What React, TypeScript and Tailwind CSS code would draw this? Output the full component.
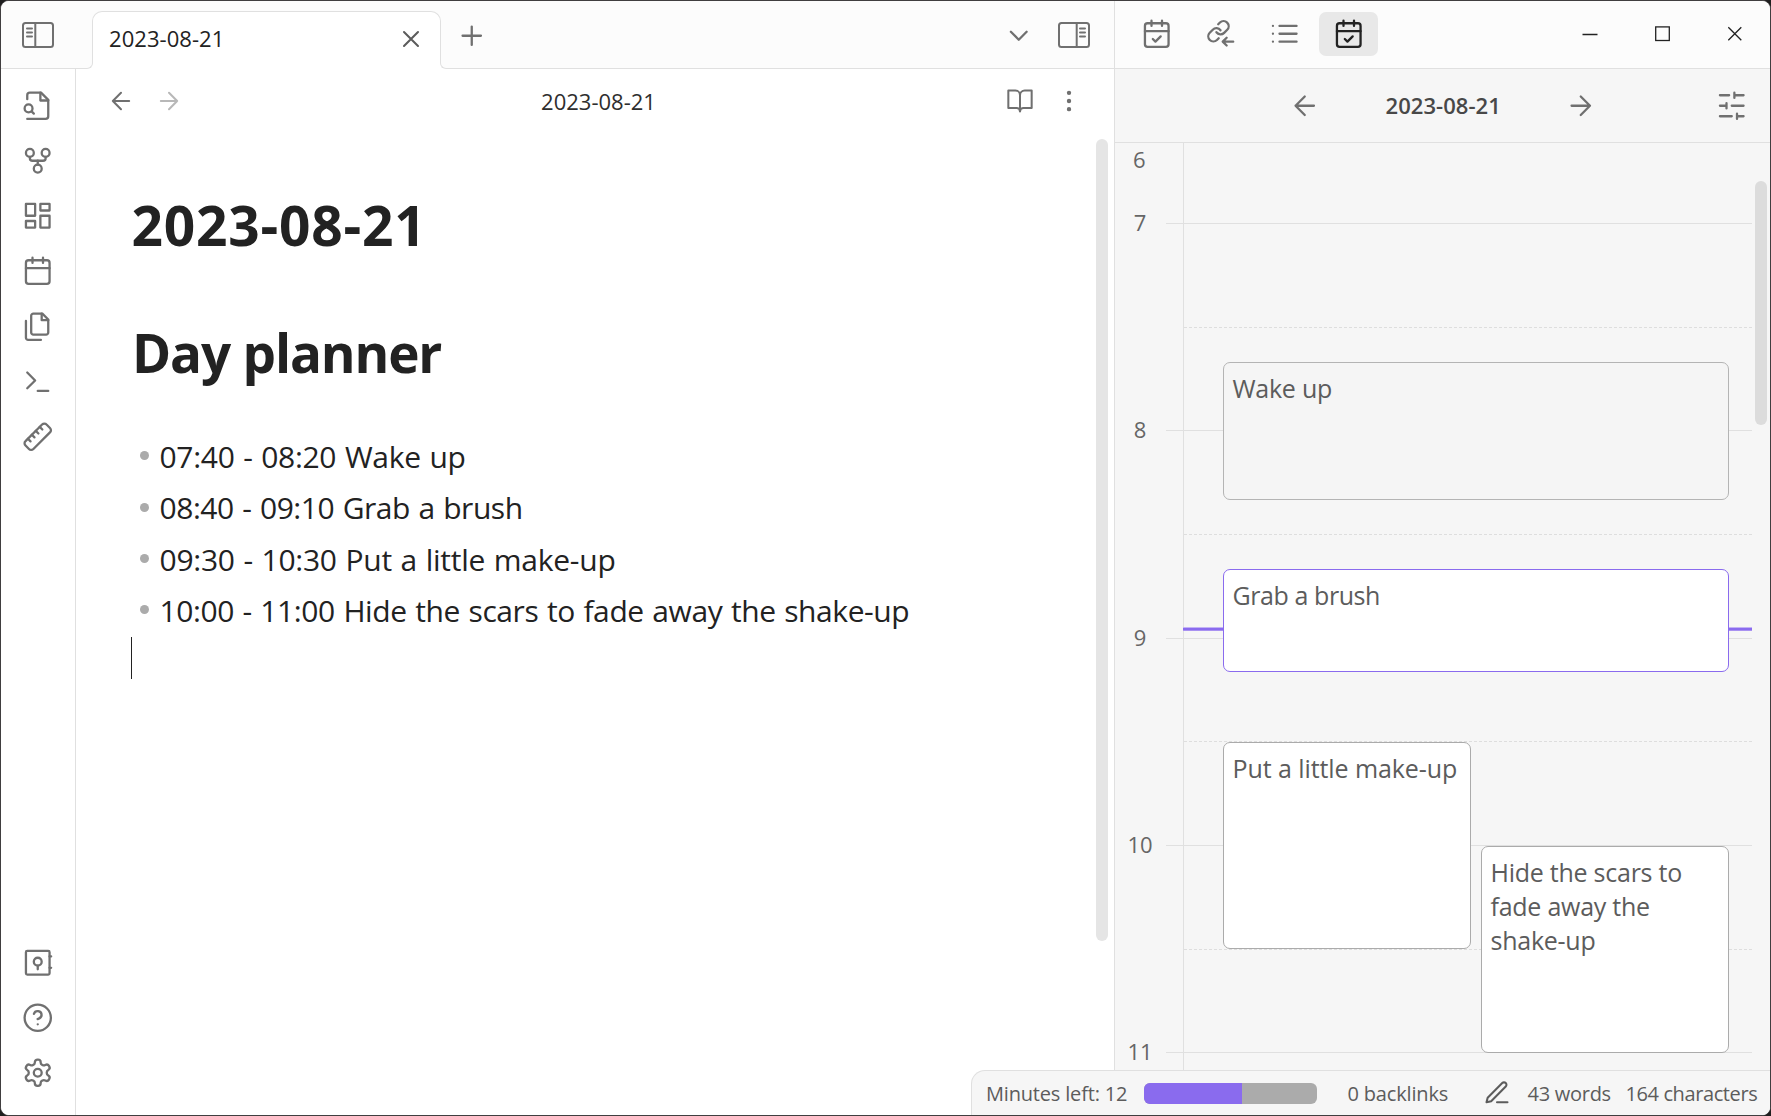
import type { ReactNode } from 'react';

const PATHS: Record<string, ReactNode> = {
  fileSearch: (
    <>
      <path d="M4 22h14a2 2 0 0 0 2-2V7.5L14.5 2H6a2 2 0 0 0-2 2v3" />
      <path d="M14 2v6h6" />
      <circle cx="5" cy="14" r="3" />
      <path d="m9 18-1.5-1.5" />
    </>
  ),
  graph: (
    <>
      <circle cx="12" cy="18" r="3" />
      <circle cx="6" cy="6" r="3" />
      <circle cx="18" cy="6" r="3" />
      <path d="M18 9v1a2 2 0 0 1-2 2H8a2 2 0 0 1-2-2V9" />
      <path d="M12 12v3" />
    </>
  ),
  dashboard: (
    <>
      <path d="M3 3h7v9H3z" />
      <path d="M14 3h7v5h-7z" />
      <path d="M14 12h7v9h-7z" />
      <path d="M3 16h7v5H3z" />
    </>
  ),
  calendar: (
    <>
      <rect x="3" y="4" width="18" height="18" rx="2" />
      <path d="M16 2v4M8 2v4M3 10h18" />
    </>
  ),
  calendarCheck: (
    <>
      <rect x="3" y="4" width="18" height="18" rx="2" />
      <path d="M16 2v4M8 2v4M3 10h18" />
      <path d="m9 16 2 2 4-4" />
    </>
  ),
  files: (
    <>
      <path d="M15.5 2H8.6c-.4 0-.8.2-1.1.5-.3.3-.5.7-.5 1.1v12.8c0 .4.2.8.5 1.1.3.3.7.5 1.1.5h9.8c.4 0 .8-.2 1.1-.5.3-.3.5-.7.5-1.1V6.5L15.5 2z" />
      <path d="M3 7.6v12.8c0 .4.2.8.5 1.1.3.3.7.5 1.1.5h9.8" />
      <path d="M15 2v5h5" />
    </>
  ),
  terminal: <path d="m4 17 6-6-6-6M12 19h8" />,
  ruler: (
    <>
      <path d="M21.3 8.7 8.7 21.3c-1 1-2.5 1-3.4 0l-2.6-2.6c-1-1-1-2.5 0-3.4L15.3 2.7c1-1 2.5-1 3.4 0l2.6 2.6c1 1 1 2.5 0 3.4Z" />
      <path d="m7.5 10.5 2 2M10.5 7.5l2 2M13.5 4.5l2 2M4.5 13.5l2 2" />
    </>
  ),
  vault: (
    <>
      <rect x="3" y="3" width="18" height="18" rx="1" />
      <circle cx="12" cy="11.2" r="3" />
      <path d="M12 14.2v2.8M21 7.2h1.2M21 15.9h1.2" />
    </>
  ),
  help: (
    <>
      <circle cx="12" cy="12" r="10" />
      <path d="M9.09 9a3 3 0 0 1 5.83 1c0 2-3 3-3 3M12 17h.01" />
    </>
  ),
  settings: (
    <>
      <path d="M12.22 2h-.44a2 2 0 0 0-2 2v.18a2 2 0 0 1-1 1.73l-.43.25a2 2 0 0 1-2 0l-.15-.08a2 2 0 0 0-2.73.73l-.22.38a2 2 0 0 0 .73 2.73l.15.1a2 2 0 0 1 1 1.72v.51a2 2 0 0 1-1 1.74l-.15.09a2 2 0 0 0-.73 2.73l.22.38a2 2 0 0 0 2.73.73l.15-.08a2 2 0 0 1 2 0l.43.25a2 2 0 0 1 1 1.73V20a2 2 0 0 0 2 2h.44a2 2 0 0 0 2-2v-.18a2 2 0 0 1 1-1.73l.43-.25a2 2 0 0 1 2 0l.15.08a2 2 0 0 0 2.73-.73l.22-.39a2 2 0 0 0-.73-2.73l-.15-.08a2 2 0 0 1-1-1.74v-.5a2 2 0 0 1 1-1.74l.15-.09a2 2 0 0 0 .73-2.73l-.22-.38a2 2 0 0 0-2.73-.73l-.15.08a2 2 0 0 1-2 0l-.43-.25a2 2 0 0 1-1-1.73V4a2 2 0 0 0-2-2z" />
      <circle cx="12" cy="12" r="3" />
    </>
  ),
  backlinks: (
    <>
      <g transform="translate(.9 .75) scale(.78)" strokeWidth="2.25">
        <path d="M10 13a5 5 0 0 0 7.54.54l3-3a5 5 0 0 0-7.07-7.07l-1.72 1.71" />
        <path d="M14 11a5 5 0 0 0-7.54-.54l-3 3a5 5 0 0 0 7.07 7.07l1.71-1.71" />
      </g>
      <path d="M21.5 18h-7.8M16.5 15l-3 3 3 3" />
    </>
  ),
  list: <path d="M8 6h13M8 12h13M8 18h13M3 6h.01M3 12h.01M3 18h.01" />,
  sliders: <path d="M21 4h-7M10 4H3M21 12h-9M8 12H3M21 20h-5M12 20H3M14 2v4M8 10v4M16 18v4" />,
  pen: <path d="M12 20h9M16.5 3.5a2.121 2.121 0 0 1 3 3L7 19l-4 1 1-4Z" />,
  book: <path d="M2 3h6a4 4 0 0 1 4 4v14a3 3 0 0 0-3-3H2zM22 3h-6a4 4 0 0 0-4 4v14a3 3 0 0 1 3-3h7z" />,
  more: (
    <>
      <circle cx="12" cy="12" r="1" />
      <circle cx="12" cy="5" r="1" />
      <circle cx="12" cy="19" r="1" />
    </>
  ),
  x: <path d="M18 6 6 18M6 6l12 12" />,
  plus: <path d="M12 5v14M5 12h14" />,
  chevronDown: <path d="m6 9 6 6 6-6" />,
  arrowLeft: <path d="M19 12H5M12 19l-7-7 7-7" />,
  arrowRight: <path d="M5 12h14M12 5l7 7-7 7" />,
};

function Icon({ name, small = false, className = 'text-[#707070]' }: { name: string; small?: boolean; className?: string }) {
  const size = small ? 28 : 31.5;
  return (
    <svg
      width={size}
      height={size}
      viewBox="0 0 24 24"
      fill="none"
      stroke="currentColor"
      strokeWidth="1.75"
      strokeLinecap="round"
      strokeLinejoin="round"
      className={`shrink-0 ${className}`}
    >
      {PATHS[name]}
    </svg>
  );
}

function SidebarToggle({ flip = false }: { flip?: boolean }) {
  return (
    <svg
      width="32"
      height="26"
      viewBox="0 0 32 26"
      fill="none"
      stroke="#707070"
      strokeWidth="2"
      strokeLinecap="round"
      className={flip ? 'shrink-0 -scale-x-100' : 'shrink-0'}
    >
      <rect x="1" y="1" width="30" height="24" rx="2.5" />
      <path d="M13.3 1v24M5 6.5h5M5 10.5h5M5 14.5h5" />
    </svg>
  );
}

const RIBBON = ['fileSearch', 'graph', 'dashboard', 'calendar', 'files', 'terminal', 'ruler'];
const RIBBON_BOTTOM = ['vault', 'help', 'settings'];

const PLAN = [
  { text: '07:40 - 08:20 Wake up', tracking: 'tracking-[-0.3px]' },
  { text: '08:40 - 09:10 Grab a brush', tracking: 'tracking-[-0.46px]' },
  { text: '09:30 - 10:30 Put a little make-up', tracking: 'tracking-[-0.26px]' },
  { text: '10:00 - 11:00 Hide the scars to fade away the shake-up', tracking: 'tracking-[-0.41px]' },
];

const CARDS = [
  { title: 'Wake up', box: 'left-[108px] top-[219px] w-[506px] h-[138px] border-[#b4b4b4] bg-[#f5f5f5] tracking-[-0.25px]' },
  { title: 'Grab a brush', box: 'left-[108px] top-[426px] w-[506px] h-[103px] border-[#8a6bee] bg-white tracking-[-0.42px]' },
  { title: 'Put a little make-up', box: 'left-[108px] top-[599px] w-[248px] h-[207px] border-[#ababab] bg-white tracking-[-0.08px]' },
  { title: 'Hide the scars to fade away the shake-up', box: 'left-[366px] top-[703px] w-[248px] h-[207px] border-[#ababab] bg-white tracking-[-0.25px]' },
];

function TopBar() {
  return (
    <header className="flex h-[68px] shrink-0 bg-[#fcfcfc]">
      <div className="flex w-[91px] border-b border-[#e0e0e0] pt-[21px] pl-[21px]">
        <SidebarToggle />
      </div>
      <div className="relative mt-2.5 flex w-[349px] items-center justify-between rounded-t-[10px] border border-b-0 border-[#e0e0e0] bg-white pr-[15px] pb-[4px] pl-4">
        <span className="-mt-px text-[22px] tracking-[0.05px] text-[#222]">2023-08-21</span>
        <Icon name="x" small className="text-[#5c5c5c]" />
        <span className="absolute bottom-0 -left-[7px] h-[7px] w-[7px] bg-white">
          <span className="block h-full w-full rounded-br-[6px] border-r border-b border-[#e0e0e0] bg-[#fcfcfc]" />
        </span>
        <span className="absolute -right-[7px] bottom-0 h-[7px] w-[7px] bg-white">
          <span className="block h-full w-full rounded-bl-[6px] border-b border-l border-[#e0e0e0] bg-[#fcfcfc]" />
        </span>
      </div>
      <div className="flex flex-1 items-center border-b border-[#e0e0e0] pt-0.5 pr-[24.5px] pb-px pl-[15px]">
        <Icon name="plus" className="mt-0.5 text-[#707070]" />
        <span className="mt-0.5 mr-[23.5px] ml-auto">
          <Icon name="chevronDown" />
        </span>
        <SidebarToggle flip />
      </div>
      <div className="flex w-[656px] items-center border-b border-l border-[#e0e0e0] pb-px pl-3">
        <div className="flex gap-[5px]">
          {['calendarCheck', 'backlinks', 'list'].map((n) => (
            <span key={n} className="flex h-11 w-[59px] items-center justify-center">
              <Icon name={n} />
            </span>
          ))}
          <span className="flex h-11 w-[59px] items-center justify-center rounded-[7px] bg-[#e8e8e8]">
            <Icon name="calendarCheck" className="text-[#222]" />
          </span>
        </div>
        <svg width="160" height="16" viewBox="0 0 160 16" fill="none" stroke="#222" className="mr-[28px] ml-auto -mt-px" strokeWidth="1.3">
          <path d="M.5 8.5h15" />
          <rect x="73.7" y=".9" width="13.6" height="13.6" />
          <path d="m146.3 1.2 13 13M159.3 1.2l-13 13" />
        </svg>
      </div>
    </header>
  );
}

function Ribbon() {
  return (
    <nav className="flex w-[75px] flex-col items-center justify-between border-r border-[#e0e0e0] bg-white pt-[9px] pb-[15px]">
      <div>
        {RIBBON.map((n) => (
          <div key={n} className="flex h-[55.2px] items-center">
            <Icon name={n} />
          </div>
        ))}
      </div>
      <div>
        {RIBBON_BOTTOM.map((n) => (
          <div key={n} className="flex h-[55.1px] items-center">
            <Icon name={n} />
          </div>
        ))}
      </div>
    </nav>
  );
}

function Editor() {
  return (
    <main className="relative flex flex-1 flex-col bg-white">
      <div className="flex h-16 items-center justify-between pr-[31px] pl-[31px]">
        <div className="flex w-40 gap-5">
          <Icon name="arrowLeft" small />
          <Icon name="arrowRight" small className="text-[#b8b8b8]" />
        </div>
        <span className="ml-[7px] text-[22px] text-[#2e2e2e]">2023-08-21</span>
        <div className="flex w-40 justify-end gap-[21px]">
          <Icon name="book" small />
          <Icon name="more" small />
        </div>
      </div>
      <article className="pl-[55px] text-[#222]">
        <h1 className="mt-[51px] pl-[0.5px] text-[55px] leading-[82px] font-bold tracking-[0.8px]">2023-08-21</h1>
        <h2 className="mt-[46px] pl-px text-[53px] leading-[82px] font-bold tracking-[-1.15px]">Day planner</h2>
        <ul className="mt-[37px] text-[30px] leading-[51.4px]">
          {PLAN.map((p) => (
            <li key={p.text} className="flex items-center pl-[9px]">
              <span className="-mt-0.5 mr-[10.5px] h-[9px] w-[9px] rounded-full bg-[#ababab]" />
              <span className={`[word-spacing:1.2px] ${p.tracking}`}>{p.text}</span>
            </li>
          ))}
        </ul>
        <div className="h-[42px] w-px bg-[#222]" />
      </article>
      <div className="absolute top-[70px] right-[6px] h-[802px] w-3 rounded-[6px] bg-[#e5e5e5]" />
    </main>
  );
}

function Planner() {
  return (
    <aside className="flex w-[656px] flex-col border-l border-[#e0e0e0] bg-[#f6f6f6]">
      <div className="flex h-[74px] shrink-0 items-center border-b border-[#e0e0e0] pr-[23px] pl-[173.5px]">
        <Icon name="arrowLeft" />
        <span className="ml-[65.5px] w-[116px] text-[22px] font-semibold tracking-[0.05px] whitespace-nowrap text-[#484848]">
          2023-08-21
        </span>
        <span className="ml-[63px]">
          <Icon name="arrowRight" />
        </span>
        <span className="ml-auto">
          <Icon name="sliders" />
        </span>
      </div>
      <div className="relative flex-1 overflow-hidden text-[#666]">
        <div className="flex h-20">
          <div className="-mt-px w-[68px] pl-[18px] text-[22px] leading-[34px]">6</div>
          <div className="w-[569px] border-l border-[#e0e0e0]" />
        </div>
        {[7, 8, 9, 10, 11].map((h) => (
          <div key={h} className="flex h-[207.33px]">
            <div className="-mt-[18px] w-[50px] text-center text-[22px] leading-[34px]">{h}</div>
            <div className="ml-px w-[17px] border-t border-[#e0e0e0]" />
            <div className="w-[569px] border-t border-l border-[#e0e0e0]">
              <div className="mt-[102.67px] border-t border-dashed border-[#dedede]" />
            </div>
          </div>
        ))}
        <div className="absolute top-[484px] left-[68px] h-1 w-[569px] border-t border-b border-t-[#c3b3f5] border-b-[#a992f1] bg-[#8a6bee]" />
        {CARDS.map((c) => (
          <div
            key={c.title}
            className={`absolute rounded-[7px] border pt-2 pl-[8.5px] text-[25px] leading-[34px] text-[#5c5c5c] ${c.box}`}
          >
            {c.title}
          </div>
        ))}
        <div className="absolute top-[38px] right-[3px] h-[244px] w-3 rounded-[6px] bg-[#dcdcdc]" />
      </div>
    </aside>
  );
}

function StatusBar() {
  return (
    <footer className="absolute right-0 bottom-0 flex h-[45px] w-[799px] items-center rounded-tl-[14px] border-t border-l border-[#e0e0e0] bg-[#f6f6f6] pl-[14px] text-[20px] whitespace-nowrap text-[#5c5c5c]">
      <span className="mt-px w-[158px] tracking-[-0.18px]">Minutes left: 12</span>
      <div className="flex h-[21px] w-[173px] overflow-hidden rounded-[6px] bg-[#ababab]">
        <div className="w-[98px] bg-[#8a6bee]" />
      </div>
      <span className="mt-px ml-[30.5px] w-[135px] tracking-[-0.17px]">0 backlinks</span>
      <Icon name="pen" small className="text-[#5c5c5c]" />
      <span className="mt-px ml-[17px] w-[98px] tracking-[-0.27px]">43 words</span>
      <span className="mt-px tracking-[-0.4px]">164 characters</span>
    </footer>
  );
}

export default function App() {
  return (
    <div className="h-[1116px] w-[1771px] overflow-hidden bg-[#1f1f1f] font-['Open_Sans','Noto_Sans',sans-serif]">
      <div className="relative flex h-full flex-col overflow-hidden rounded-[9px] border border-[#403e3f] bg-white">
        <TopBar />
        <div className="flex min-h-0 flex-1">
          <Ribbon />
          <Editor />
          <Planner />
        </div>
        <StatusBar />
      </div>
    </div>
  );
}
